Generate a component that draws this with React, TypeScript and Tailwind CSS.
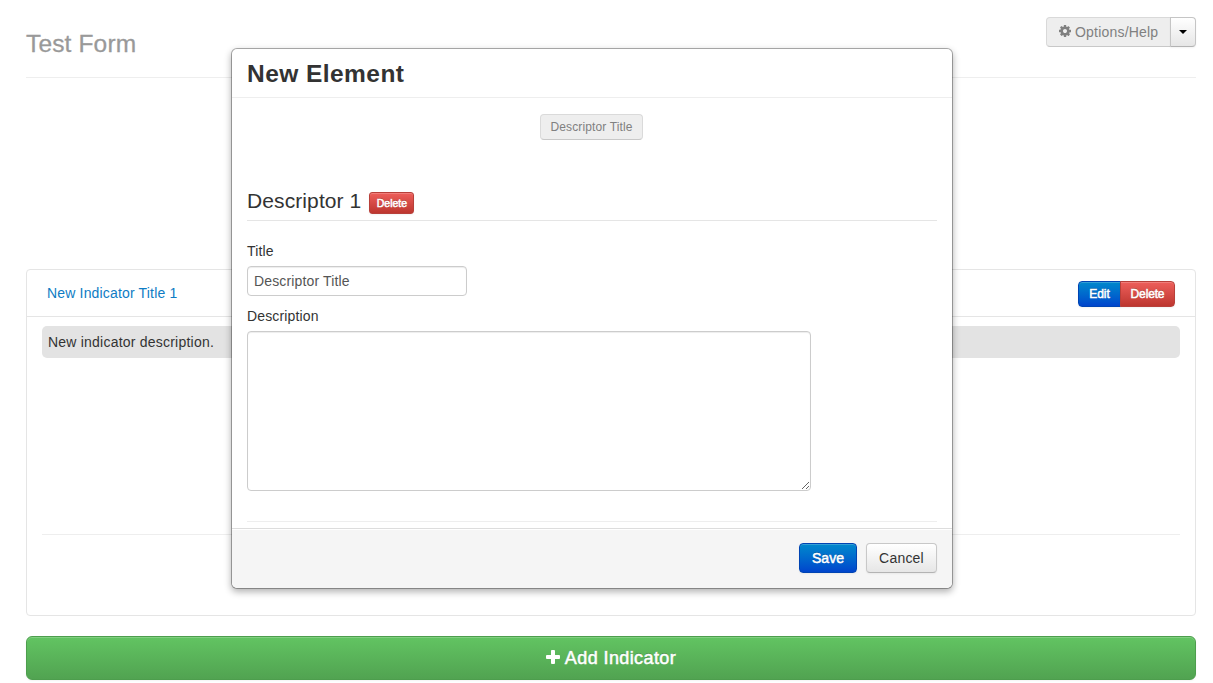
import type { ReactNode } from 'react';

const BLUE = 'bg-linear-to-b from-[#0088cc] to-[#0044cc] text-white border-[#0044b3]';
const RED = 'bg-linear-to-b from-[#ee5f5b] to-[#bd362f] text-white border-[#b8403a]';
const RAISED = 'border shadow-[inset_0_1px_0_rgba(255,255,255,0.2),0_1px_2px_rgba(0,0,0,0.05)]';
const ON_DARK = '[text-shadow:0_-1px_0_rgba(0,0,0,0.25)] [-webkit-text-stroke:0.5px_white]';

function CogIcon() {
  return (
    <svg viewBox="0 0 1536 1792" className="-mt-[2px] h-[14px] w-[12px] shrink-0" fill="currentColor" fillRule="evenodd">
      <path d="M1024 896q0 106-75 181t-181 75-181-75-75-181 75-181 181-75 181 75 75 181zm512-109v222q0 12-8 23t-20 13l-185 28q-19 54-39 91 35 50 107 138 10 12 10 25t-9 23q-27 37-99 108t-94 71q-12 0-26-9l-138-108q-44 23-91 38-16 136-29 186-7 28-36 28h-222q-14 0-24.500-8.500t-11.500-21.500l-28-184q-49-16-90-37l-141 107q-10 9-25 9-14 0-25-11-126-114-165-168-7-10-7-23 0-12 8-23 15-21 51-66.500t54-70.500q-27-50-41-99l-183-27q-13-2-21-12.500t-8-23.500v-222q0-12 8-23t19-13l186-28q14-46 39-92-40-57-107-138-10-12-10-24 0-10 9-23 26-36 98.500-107.500t94.500-71.500q13 0 26 10l138 107q44-23 91-38 16-136 29-186 7-28 36-28h222q14 0 24.500 8.500t11.500 21.500l28 184q49 16 90 37l142-107q9-9 24-9 13 0 25 10 129 119 165 170 7 8 7 22 0 12-8 23-15 21-51 66.500t-54 70.500q26 50 41 98l183 28q13 2 21 12.500t8 23.500z" />
    </svg>
  );
}

function PlusIcon() {
  return (
    <svg viewBox="0 0 14 14" className="h-[14px] w-[14px] shrink-0 -translate-y-px" fill="currentColor">
      <path d="M5.9 0h2.2q.9 0 .9.900V5h4.100q.9 0 .9.900v2.200q0 .9-.9.900H9v4.100q0 .9-.9.900H5.900q-.9 0-.9-.9V9H.9Q0 9 0 8.100V5.900Q0 5 .9 5H5V.9Q5 0 5.900 0z" />
    </svg>
  );
}

function Label({ children }: { children: ReactNode }) {
  return <label className="block h-5 text-[14px] leading-5 tracking-[0.15px]">{children}</label>;
}

function Page() {
  return (
    <div className="flex h-[683px] flex-col px-[26px] pr-[17px]">
      <header className="flex h-[78px] shrink-0 items-start justify-between border-b border-[#eeeeee] pt-[17px]">
        <h1 className="mt-[7px] text-[24.5px] leading-10 tracking-[0.15px] text-[#999999] [-webkit-text-stroke:0.3px_#999]">
          Test Form
        </h1>
        <div className="flex h-[30px] w-[150px]">
          <button className="flex w-[125px] items-center gap-[4px] rounded-l-[4px] border border-[#d9d9d9] border-b-[#c8c8c8] bg-[#eeeeee] pl-[12px] text-[14px] whitespace-nowrap text-[#808080]">
            <CogIcon />
            <span className="tracking-[0.2px]">Options/Help</span>
          </button>
          <button className="-ml-px flex w-[26px] items-center justify-center rounded-r-[4px] border border-[#c5c5c5] border-b-[#b3b3b3] bg-linear-to-b from-white to-[#e6e6e6] shadow-[0_1px_2px_rgba(0,0,0,0.05)]">
            <svg viewBox="0 0 8 4" className="h-[4px] w-[8px]">
              <path d="M0 0h8L4 4z" fill="#000" />
            </svg>
          </button>
        </div>
      </header>

      <section className="mt-[191px] h-[347px] shrink-0 rounded-[4px] border border-[#e5e5e5]">
        <div className="flex h-[47px] items-start justify-between border-b border-[#e5e5e5] pr-5 pl-5">
          <a className="mt-[13px] text-[14px] leading-5 tracking-[0.17px] text-[#0e7cc4]">New Indicator Title 1</a>
          <div className="mt-[11px] flex h-[26px] text-[12px]">
            <button className={`${BLUE} ${RAISED} ${ON_DARK} w-[43px] rounded-l-[4px]`}>Edit</button>
            <button className={`${RED} ${RAISED} ${ON_DARK} -ml-px w-[55px] rounded-r-[4px] tracking-[-0.15px]`}>
              Delete
            </button>
          </div>
        </div>
        <div className="mx-[15px] mt-[9px] flex h-8 items-center rounded-[5px] bg-[#e3e3e3] px-[6px] text-[14px] tracking-[0.22px]">
          New indicator description.
        </div>
        <hr className="mx-[15px] mt-[176px] border-[#eeeeee]" />
      </section>

      <button
        className={`mt-5 flex h-[44px] shrink-0 items-center justify-center gap-[5px] rounded-[6px] border-[#4d9e4d] bg-linear-to-b from-[#62c462] to-[#51a351] text-[18px] text-white ${RAISED} ${ON_DARK}`}
      >
        <PlusIcon />
        <span className="tracking-[0.4px]">Add Indicator</span>
      </button>
    </div>
  );
}

function ElementDialog() {
  return (
    <div
      role="dialog"
      className="absolute top-[48px] left-[231px] flex h-[541px] w-[722px] flex-col rounded-[6px] border border-black/30 bg-white bg-clip-padding shadow-[0_3px_7px_rgba(0,0,0,0.3)]"
    >
      <div className="h-[49px] shrink-0 border-b border-[#eeeeee] px-[15px] pt-[9px]">
        <h3 className="text-[24.5px] leading-[31px] font-bold tracking-[0.45px]">New Element</h3>
      </div>
      <div className="flex grow flex-col px-[15px] pt-4">
        <button className="ml-[293px] h-[26px] w-[103px] rounded-[4px] border border-[#dadada] border-b-[#c8c8c8] bg-[#eeeeee] text-[12px] tracking-[0.12px] text-[#808080]">
          Descriptor Title
        </button>
        <div className="mt-[41px] flex h-10 items-start border-b border-[#e5e5e5]">
          <h4 className="text-[21px] leading-10 tracking-[0.1px]">Descriptor 1</h4>
          <button
            className={`mt-[11px] ml-[8px] h-[22px] w-[45px] rounded-[3px] text-[10.5px] leading-5 ${RED} ${RAISED} ${ON_DARK}`}
          >
            Delete
          </button>
        </div>
        <div className="mt-5">
          <Label>Title</Label>
          <input
            readOnly
            value="Descriptor Title"
            className="mt-[5px] block h-[30px] w-[220px] rounded-[4px] border border-[#cccccc] px-[6px] text-[14px] tracking-[0.15px] text-[#555555] shadow-[inset_0_1px_1px_rgba(0,0,0,0.075)]"
          />
        </div>
        <div className="mt-[10px]">
          <Label>Description</Label>
          <textarea className="mt-[5px] block h-[160px] w-[564px] resize rounded-[4px] border border-[#cccccc] shadow-[inset_0_1px_1px_rgba(0,0,0,0.075)]" />
        </div>
        <hr className="mt-[30px] border-[#eeeeee]" />
      </div>
      <div className="flex h-[60px] shrink-0 justify-end gap-[9px] rounded-b-[6px] border-t border-[#dddddd] bg-[#f5f5f5] px-[15px] pt-[14px] text-[14px] shadow-[inset_0_1px_0_white]">
        <button className={`h-[30px] w-[58px] rounded-[4px] ${BLUE} ${RAISED} ${ON_DARK}`}>Save</button>
        <button className="h-[30px] w-[71px] rounded-[4px] border border-[#c8c8c8] border-b-[#b3b3b3] bg-linear-to-b from-white to-[#e6e6e6] tracking-[0.2px] shadow-[0_1px_2px_rgba(0,0,0,0.05)]">
          Cancel
        </button>
      </div>
    </div>
  );
}

export default function App() {
  return (
    <main className="relative h-[683px] w-[1213px] overflow-hidden bg-white font-['Liberation_Sans',Arial,sans-serif] text-[#333333]">
      <Page />
      <ElementDialog />
    </main>
  );
}
